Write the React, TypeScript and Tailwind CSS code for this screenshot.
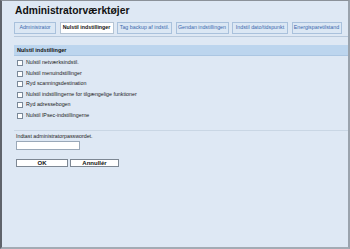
import React from "react";

const tabs = [
  { label: "Administrator", w: 42 },
  { label: "Nulstil indstillinger", w: 54, active: true },
  { label: "Tag backup af indstil.", w: 55 },
  { label: "Gendan indstillingen", w: 53 },
  { label: "Indstil dato/tidspunkt", w: 56 },
  { label: "Energisparetilstand", w: 50 },
];

const items = [
  "Nulstil netværksindstil.",
  "Nulstil menuindstillinger",
  "Ryd scanningsdestination",
  "Nulstil indstillingerne for tilgængelige funktioner",
  "Ryd adressebogen",
  "Nulstil IPsec-indstillingerne",
];

export default function App() {
  return (
    <div
      className="w-[350px] h-[249px] bg-[#dee8f4] border-l-2 border-l-[#5f636b] border-t border-t-[#8b9199] border-r-2 border-r-[#9aa3ad] border-b-2 border-b-[#a3abb4] overflow-hidden flex flex-col"
      style={{ fontFamily: '"Liberation Sans", Arial, sans-serif' }}
    >
      <div className="pl-[13px] pt-[3px] text-[10.3px] leading-[13px] font-bold text-[#111]">
        Administratorværktøjer
      </div>
      <div className="ml-[12px] mt-[5px] flex items-end gap-[3.5px] border-b border-[#b8c9dc] pb-[2px]">
        {tabs.map((t) => (
          <div
            key={t.label}
            style={{ width: t.w }}
            className={
              "h-[12px] flex items-center justify-center text-[5.3px] whitespace-nowrap border " +
              (t.active
                ? "bg-white border-[#b5c4d4] font-bold text-[#111]"
                : "bg-[#dbe7f4] border-[#a9c1dc] text-[#3a67ad]")
            }
          >
            {t.label}
          </div>
        ))}
      </div>
      <div className="ml-[12px] mt-[8px] h-[11px] bg-[#bcd5ee] border-b border-[#abc6e2] flex items-center pl-[3px] text-[5.5px] font-bold text-[#111]">
        Nulstil indstillinger
      </div>
      <div className="ml-[15px] mt-[2px] flex flex-col">
        {items.map((it) => (
          <div key={it} className="h-[10.5px] flex items-center gap-[3px] text-[5.3px] text-[#222]">
            <div className="w-[6px] h-[6px] bg-white border border-[#7a8898]" />
            <span>{it}</span>
          </div>
        ))}
      </div>
      <div className="ml-[12px] mt-[9px] border-t border-[#c9d6e4]" />
      <div className="ml-[14px] mt-[2px] text-[5.3px] text-[#222] leading-[7px]">
        Indtast administratorpasswordet.
      </div>
      <div className="ml-[14px] mt-[1px] w-[64px] h-[9px] bg-white border border-[#9aa8b8]" />
      <div className="ml-[14px] mt-[9px] flex gap-[2px]">
        <div className="w-[52px] h-[8px] bg-white border border-[#7d8793] flex items-center justify-center text-[6px] font-bold text-[#111]">
          OK
        </div>
        <div className="w-[49px] h-[8px] bg-white border border-[#7d8793] flex items-center justify-center text-[6px] font-bold text-[#111]">
          Annullér
        </div>
      </div>
    </div>
  );
}
